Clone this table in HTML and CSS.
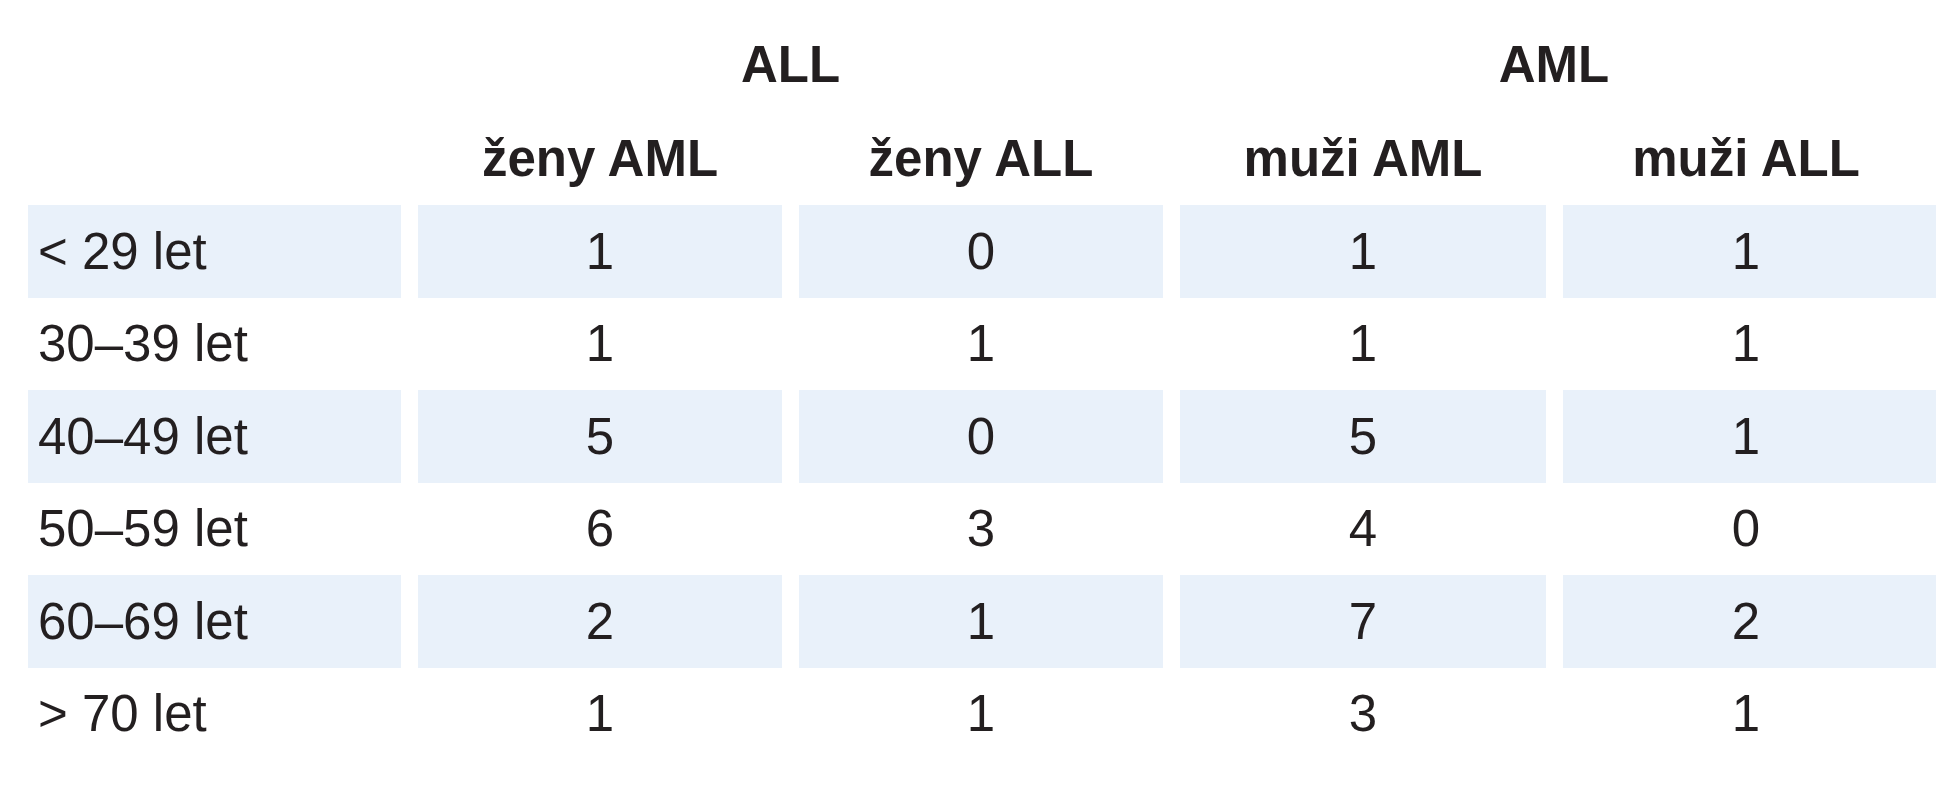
FILE: index.html
```html
<!DOCTYPE html>
<html lang="cs">
<head>
<meta charset="utf-8">
<title>Tabulka</title>
<link rel="stylesheet" href="styles.css">
</head>
<body>
<div class="table">
  <div class="group-row">
    <div class="blank"></div>
    <div class="group span2">ALL</div>
    <div class="group span2 last">AML</div>
  </div>
  <div class="sub-row">
    <div class="blank"></div>
    <div class="sub">ženy AML</div>
    <div class="sub">ženy ALL</div>
    <div class="sub">muži AML</div>
    <div class="sub last">muži ALL</div>
  </div>
  <div class="row shaded">
    <div class="label">&lt; 29 let</div><div class="num">1</div><div class="num">0</div><div class="num">1</div><div class="num last">1</div>
  </div>
  <div class="row">
    <div class="label">30–39 let</div><div class="num">1</div><div class="num">1</div><div class="num">1</div><div class="num last">1</div>
  </div>
  <div class="row shaded">
    <div class="label">40–49 let</div><div class="num">5</div><div class="num">0</div><div class="num">5</div><div class="num last">1</div>
  </div>
  <div class="row">
    <div class="label">50–59 let</div><div class="num">6</div><div class="num">3</div><div class="num">4</div><div class="num last">0</div>
  </div>
  <div class="row shaded">
    <div class="label">60–69 let</div><div class="num">2</div><div class="num">1</div><div class="num">7</div><div class="num last">2</div>
  </div>
  <div class="row">
    <div class="label">&gt; 70 let</div><div class="num">1</div><div class="num">1</div><div class="num">3</div><div class="num last">1</div>
  </div>
</div>
</body>
</html>
```

FILE: styles.css
```css
html, body {
  margin: 0;
  padding: 0;
  background: #ffffff;
}

body {
  font-family: "Liberation Sans", Arial, sans-serif;
  color: #231f20;
  font-size: 51px;
  overflow: hidden;
}

.table {
  padding: 16px 0 0 28px;
  width: 1910px;
}

.group-row,
.sub-row,
.row {
  display: grid;
  grid-template-columns: 373px 364px 364px 366px 373px;
  column-gap: 17px;
}

.group-row {
  height: 96px;
}

.sub-row {
  height: 93px;
}

.row {
  height: 92.5px;
}

.group,
.sub {
  font-weight: bold;
  display: flex;
  align-items: center;
  justify-content: center;
}

.span2 {
  grid-column: span 2;
}

.group.last {
  padding-right: 8px;
}

.label,
.num {
  display: flex;
  align-items: center;
}

.label {
  padding-left: 10px;
}

.num {
  justify-content: center;
}

.num.last,
.sub.last {
  padding-right: 7px;
}

.row.shaded > div {
  background: #e9f1fa;
}
```
